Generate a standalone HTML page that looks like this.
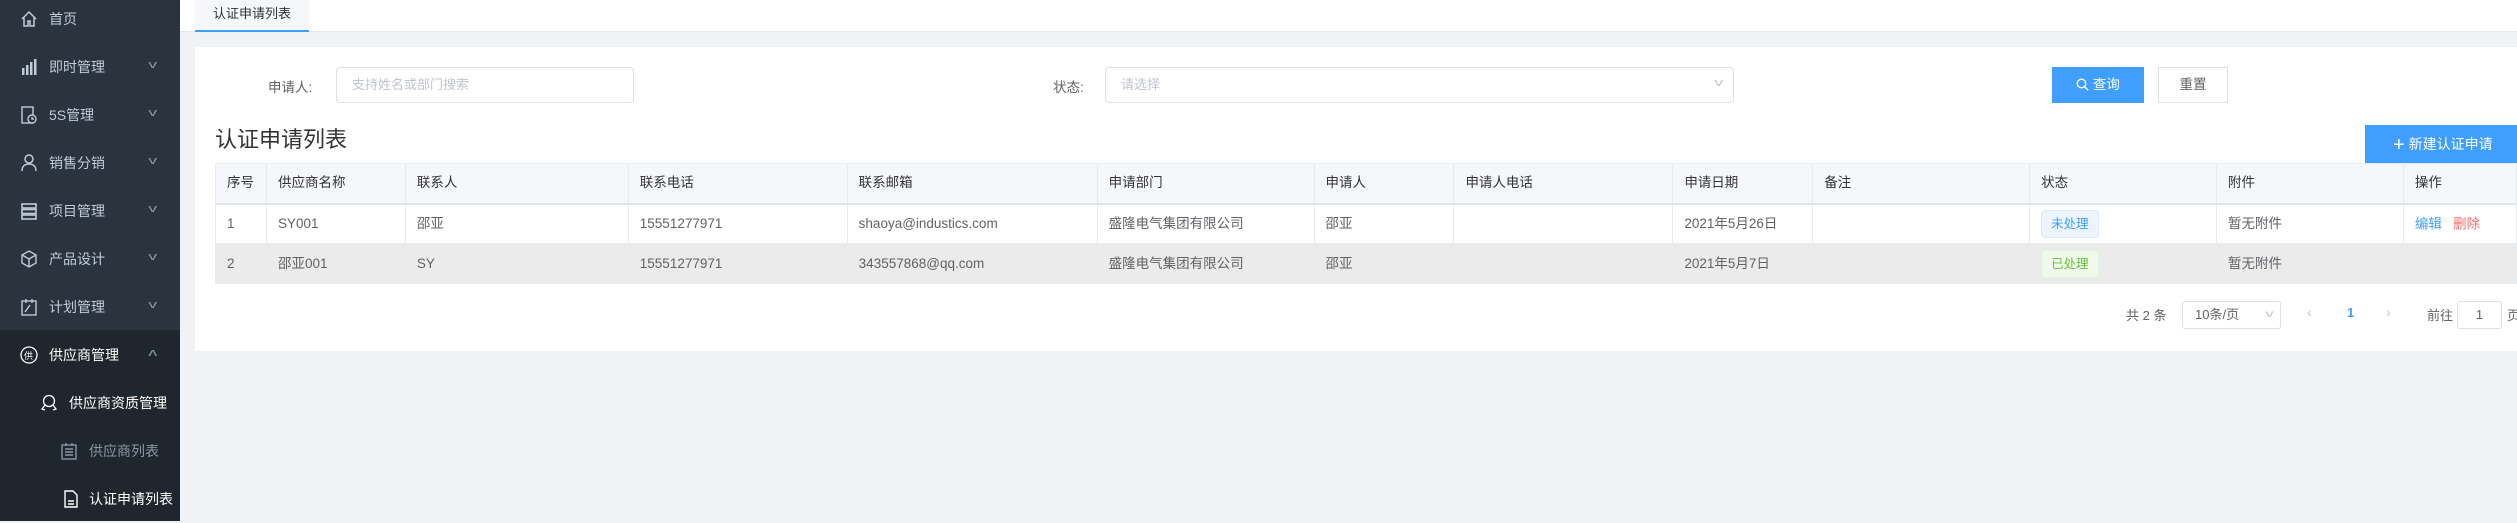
<!DOCTYPE html>
<html><head><meta charset="utf-8">
<style>
*{box-sizing:border-box;margin:0;padding:0}
body{width:2517px;height:521px;overflow:hidden;background:#f0f2f5;font-family:"Liberation Sans","Noto Sans CJK SC",sans-serif;font-size:14px;color:#606266;position:relative}
.side{position:absolute;left:0;top:0;width:180px;height:521px;background:#2b333e}
.sub{position:absolute;left:0;top:330px;width:180px;height:191px;background:#1f262d}
.mi{position:absolute;left:0;width:180px;height:48px;line-height:48px;color:#bfcbd9;font-size:14px}
.mi .ic{position:absolute;left:20px;top:15px;width:18px;height:18px}
.mi .t{position:absolute;left:49px}
.mi .ar{position:absolute;left:150px;top:-2px;font-size:11px;color:#8a96a3;transform:scaleX(1.6)}
.top{position:absolute;left:180px;top:0;right:0;height:32px;background:#fff;border-bottom:1px solid #e6e6e6}
.tab{position:absolute;left:15px;top:0;width:114px;height:32px;background:#f5f7fa;border-bottom:2px solid #409eff;text-align:center;line-height:28px;color:#303133;font-size:13px}
.card{position:absolute;left:195px;top:47px;width:2322px;height:304px;background:#fff}
.abs{position:absolute}
.inp{position:absolute;border:1px solid #dcdfe6;border-radius:4px;background:#fff;color:#c0c4cc;font-size:13px;line-height:34px;padding-left:15px}
table{position:absolute;left:215px;top:163px;border-collapse:collapse;table-layout:fixed}
td,th{height:40px;border:1px solid #e6ebf0;padding-left:11px;text-align:left;font-weight:normal;font-size:13.5px;white-space:nowrap;overflow:hidden;line-height:20px;vertical-align:middle}
td span,th span{vertical-align:middle}
th{background:#f5f7fa;color:#333;border-bottom:2px solid #dfe6ec}
tr.g td{background:#ebebeb}
.tag{display:inline-block;height:28px;line-height:26px;padding:0 9px;border-radius:4px;font-size:12.5px}
</style></head><body>
<div class="side">
<div class="sub"></div>
<div class="mi" style="top:-5px"><svg class="ic" viewBox="0 0 18 18" fill="none" stroke="#bfcbd9" stroke-width="1.5"><path d="M2 9L9 2l7 7M4 7v9h4v-5h2v5h4V7"/></svg><span class="t">首页</span></div>
<div class="mi" style="top:43px"><svg class="ic" viewBox="0 0 18 18" fill="#bfcbd9"><rect x="2" y="10" width="2.5" height="7"/><rect x="6" y="7" width="2.5" height="10"/><rect x="10" y="4" width="2.5" height="13"/><rect x="14" y="1" width="2.5" height="16"/></svg><span class="t">即时管理</span><span class="ar">v</span></div>
<div class="mi" style="top:91px"><svg class="ic" viewBox="0 0 18 18" fill="none" stroke="#bfcbd9" stroke-width="1.4"><rect x="2" y="1" width="11" height="16"/><circle cx="12" cy="13" r="4" fill="#2b333e"/><path d="M12 11v2h2"/></svg><span class="t">5S管理</span><span class="ar">v</span></div>
<div class="mi" style="top:139px"><svg class="ic" viewBox="0 0 18 18" fill="none" stroke="#bfcbd9" stroke-width="1.5"><circle cx="9" cy="5" r="4"/><path d="M2 17c0-5 3-7 7-7s7 2 7 7"/></svg><span class="t">销售分销</span><span class="ar">v</span></div>
<div class="mi" style="top:187px"><svg class="ic" viewBox="0 0 18 18" fill="none" stroke="#bfcbd9" stroke-width="1.6"><rect x="2" y="2" width="14" height="4"/><rect x="2" y="7.5" width="14" height="4"/><rect x="2" y="13" width="14" height="4"/></svg><span class="t">项目管理</span><span class="ar">v</span></div>
<div class="mi" style="top:235px"><svg class="ic" viewBox="0 0 18 18" fill="none" stroke="#bfcbd9" stroke-width="1.4"><path d="M9 1l7 4v8l-7 4-7-4V5zM2 5l7 4 7-4M9 9v8"/></svg><span class="t">产品设计</span><span class="ar">v</span></div>
<div class="mi" style="top:283px"><svg class="ic" viewBox="0 0 18 18" fill="none" stroke="#bfcbd9" stroke-width="1.4"><rect x="2" y="3" width="14" height="14"/><path d="M6 1v4M12 1v4M5 14l5-7"/></svg><span class="t">计划管理</span><span class="ar">v</span></div>
<div class="mi" style="top:331px;color:#fff"><svg class="ic" viewBox="0 0 18 18" fill="none" stroke="#fff" stroke-width="1.3"><circle cx="9" cy="9" r="8"/><text x="4" y="13" font-size="9" fill="#fff" stroke="none">供</text></svg><span class="t">供应商管理</span><span class="ar" style="transform:scaleX(1.6) rotate(180deg)">v</span></div>
<div class="mi" style="top:379px;color:#fff"><svg class="ic" style="left:40px" viewBox="0 0 18 18" fill="none" stroke="#fff" stroke-width="1.3"><circle cx="9" cy="7" r="5.5"/><path d="M5 11l-3 4 3 1M13 11l3 4-3 1"/></svg><span class="t" style="left:69px">供应商资质管理</span></div>
<div class="mi" style="top:427px;color:#8a96a3"><svg class="ic" style="left:60px" viewBox="0 0 18 18" fill="none" stroke="#8a96a3" stroke-width="1.4"><rect x="2" y="3" width="14" height="14"/><path d="M5 7h8M5 10h8M5 13h8M6 1v3M12 1v3"/></svg><span class="t" style="left:89px">供应商列表</span></div>
<div class="mi" style="top:475px;color:#fff"><svg class="ic" style="left:62px" viewBox="0 0 18 18" fill="none" stroke="#fff" stroke-width="1.4"><path d="M3 1h8l4 4v12H3zM6 11h6M6 14h6"/></svg><span class="t" style="left:89px">认证申请列表</span></div>
</div>
<div class="top"><div class="tab">认证申请列表</div></div>
<div class="card"></div>
<div class="abs" style="left:268px;top:76px;color:#606266;font-size:13.5px">申请人:</div>
<div class="inp" style="left:336px;top:67px;width:298px;height:36px">支持姓名或部门搜索</div>
<div class="abs" style="left:1053px;top:76px;color:#606266;font-size:13.5px">状态:</div>
<div class="inp" style="left:1105px;top:67px;width:629px;height:36px">请选择<span style="position:absolute;right:12px;top:-2px;transform:scaleX(1.6);font-size:11px">v</span></div>
<div class="abs" style="left:2052px;top:67px;width:92px;height:36px;background:#409eff;color:#fff;line-height:36px;text-align:center;font-size:13.5px"><svg width="13" height="13" viewBox="0 0 13 13" fill="none" stroke="#fff" stroke-width="1.4" style="vertical-align:-2px"><circle cx="5.5" cy="5.5" r="4.3"/><path d="M8.7 8.7l3.5 3.5"/></svg> 查询</div>
<div class="abs" style="left:2158px;top:67px;width:70px;height:36px;border:1px solid #dcdfe6;color:#606266;line-height:34px;text-align:center;font-size:13.5px">重置</div>
<div class="abs" style="left:215px;top:122px;font-size:22px;color:#333">认证申请列表</div>
<div class="abs" style="left:2365px;top:125px;width:152px;height:38px;background:#409eff;color:#fff;line-height:38px;padding-left:28px;font-size:14px"><span style="font-size:20px;vertical-align:-2px">+</span> 新建认证申请</div>
<table>
<colgroup><col style="width:51px"><col style="width:139px"><col style="width:223px"><col style="width:219px"><col style="width:250px"><col style="width:217px"><col style="width:140px"><col style="width:219px"><col style="width:140px"><col style="width:217px"><col style="width:187px"><col style="width:187px"><col style="width:113px"></colgroup>
<tr><th>序号</th><th>供应商名称</th><th>联系人</th><th>联系电话</th><th>联系邮箱</th><th>申请部门</th><th>申请人</th><th>申请人电话</th><th>申请日期</th><th>备注</th><th>状态</th><th>附件</th><th>操作</th></tr>
<tr><td>1</td><td>SY001</td><td>邵亚</td><td>15551277971</td><td>shaoya@industics.com</td><td>盛隆电气集团有限公司</td><td>邵亚</td><td></td><td>2021年5月26日</td><td></td><td><span class="tag" style="background:#ecf5ff;border:1px solid #d9ecff;color:#409eff">未处理</span></td><td>暂无附件</td><td><span style="color:#409eff">编辑</span>&nbsp;&nbsp;&nbsp;<span style="color:#f56c6c">删除</span></td></tr>
<tr class="g"><td>2</td><td>邵亚001</td><td>SY</td><td>15551277971</td><td>343557868@qq.com</td><td>盛隆电气集团有限公司</td><td>邵亚</td><td></td><td>2021年5月7日</td><td></td><td><span class="tag" style="background:#f0f9eb;border:1px solid #e1f3d8;color:#67c23a">已处理</span></td><td>暂无附件</td><td></td></tr>
</table>
<div class="abs" style="left:2126px;top:305px;font-size:13px">共 2 条</div>
<div class="abs" style="left:2182px;top:301px;width:99px;height:28px;border:1px solid #dcdfe6;border-radius:3px;line-height:26px;padding-left:12px;font-size:13px">10条/页<span style="position:absolute;right:8px;color:#c0c4cc;transform:scaleX(1.6);font-size:10px">v</span></div>
<div class="abs" style="left:2307px;top:304px;color:#c0c4cc;font-size:14px">&lsaquo;</div>
<div class="abs" style="left:2347px;top:305px;color:#409eff;font-size:13px;font-weight:bold">1</div>
<div class="abs" style="left:2386px;top:304px;color:#c0c4cc;font-size:14px">&rsaquo;</div>
<div class="abs" style="left:2427px;top:305px;font-size:13px">前往</div>
<div class="abs" style="left:2457px;top:301px;width:45px;height:28px;border:1px solid #dcdfe6;border-radius:3px;line-height:26px;text-align:center;font-size:13px">1</div>
<div class="abs" style="left:2507px;top:305px;font-size:13px">页</div>
</body></html>
